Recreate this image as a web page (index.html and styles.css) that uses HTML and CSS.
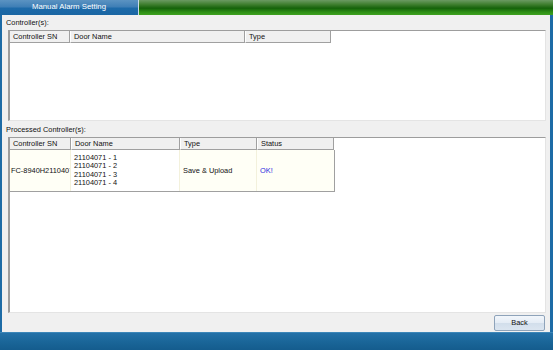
FILE: index.html
```html
<!DOCTYPE html>
<html lang="en">
<head>
    <meta charset="UTF-8">
    <title>Manual Alarm Setting</title>
    <link rel="stylesheet" href="styles.css">
</head>
<body>
    <div class="window">
        <div class="titlebar">
            <div class="tab">Manual Alarm Setting</div>
            <div class="tab-fill"></div>
        </div>

        <div class="panel">
            <div class="section-label">Controller(s):</div>
            <div class="list list-top">
                <div class="row head cols-3">
                    <div class="cell">Controller SN</div>
                    <div class="cell">Door Name</div>
                    <div class="cell">Type</div>
                </div>
            </div>

            <div class="section-label">Processed Controller(s):</div>
            <div class="list list-bottom">
                <div class="row head cols-4">
                    <div class="cell">Controller SN</div>
                    <div class="cell">Door Name</div>
                    <div class="cell">Type</div>
                    <div class="cell">Status</div>
                </div>
                <div class="row data cols-4">
                    <div class="cell middle clip">FC-8940H21104071</div>
                    <div class="cell doors">
                        <span>21104071 - 1</span>
                        <span>21104071 - 2</span>
                        <span>21104071 - 3</span>
                        <span>21104071 - 4</span>
                    </div>
                    <div class="cell middle">Save &amp; Upload</div>
                    <div class="cell middle status-ok">OK!</div>
                </div>
            </div>

            <div class="actions">
                <button type="button" class="btn">Back</button>
            </div>
        </div>

        <div class="footer"></div>
    </div>
</body>
</html>
```

FILE: styles.css
```css
body {
    margin: 0;
    font-family: "Liberation Sans", Arial, sans-serif;
    font-size: 7.4px;
    color: #111111;
    background-color: #f0f0f0;
}
.window {
    width: 553px;
    height: 350px;
    display: flex;
    flex-direction: column;
    overflow: hidden;
}
.titlebar {
    height: 15px;
    display: flex;
    flex-shrink: 0;
}
.tab {
    width: 138px;
    border-right: 1px solid #c9dbe8;
    background: linear-gradient(#5b93c2 0%, #3f7fb6 45%, #1d6aa9 55%, #1a66a3 100%);
    color: #ffffff;
    font-size: 7.8px;
    line-height: 14px;
    text-align: center;
}
.tab-fill {
    flex: 1;
    background: linear-gradient(#6b9a62 0%, #3e7e2e 30%, #15620a 55%, #2e8f16 80%, #3ea11f 100%);
}
.panel {
    flex: 1;
    display: flex;
    flex-direction: column;
    background-color: #f0f0f0;
    border-left: 2px solid #1d6ba6;
    border-right: 3px solid #1d6ba6;
    padding: 0 4px;
}
.section-label {
    height: 15px;
    line-height: 15px;
}
.list {
    margin-left: 2px;
    background-color: #ffffff;
    border: 1px solid;
    border-color: #9d9d9d #e4e4e4 #e4e4e4 #9d9d9d;
    border-left-width: 2px;
}
.list-top {
    height: 89px;
    margin-bottom: 1px;
}
.list-bottom {
    flex: 1;
}
.row {
    display: grid;
}
.cols-3 {
    grid-template-columns: 60px 175px 86px;
    width: 321px;
}
.cols-4 {
    grid-template-columns: 61px 109px 77px 77px;
    width: 324px;
}
.head .cell {
    height: 11px;
    line-height: 11px;
    padding-left: 3px;
    background-color: #f0f0f0;
    border-right: 1px solid #a0a0a0;
    border-bottom: 1px solid #a0a0a0;
    border-left: 1px solid #ffffff;
}
.head .cell:first-child {
    border-left: none;
}
.data {
    height: 41px;
    border-bottom: 1px solid #a0a0a0;
    border-right: 1px solid #a0a0a0;
}
.data .cell {
    padding-left: 3px;
    background-color: #fffff6;
    border-right: 1px solid #f3f1dc;
}
.data .cell:last-child {
    border-right: none;
}
.middle {
    display: flex;
    align-items: center;
}
.clip {
    overflow: hidden;
    white-space: nowrap;
    padding-left: 1px !important;
}
.doors {
    display: flex;
    flex-direction: column;
    justify-content: center;
    line-height: 8.5px;
    background-color: #ffffff !important;
}
.status-ok {
    color: #2a2ae0;
}
.actions {
    height: 19px;
    display: flex;
    justify-content: flex-end;
    align-items: center;
    padding-right: 1px;
}
.btn {
    width: 51px;
    height: 16px;
    padding: 0;
    font-family: "Liberation Sans", Arial, sans-serif;
    font-size: 7.4px;
    color: #111111;
    background: linear-gradient(#f2f6fb 0%, #e4ecf5 50%, #d2deeb 51%, #dbe5f0 100%);
    border: 1px solid #8ea3ba;
    border-radius: 2px;
}
.footer {
    height: 17px;
    flex-shrink: 0;
    background: linear-gradient(#2471a8 0%, #1a6699 50%, #145c8d 100%);
    border-top: 1px solid #3c86b8;
}
```
